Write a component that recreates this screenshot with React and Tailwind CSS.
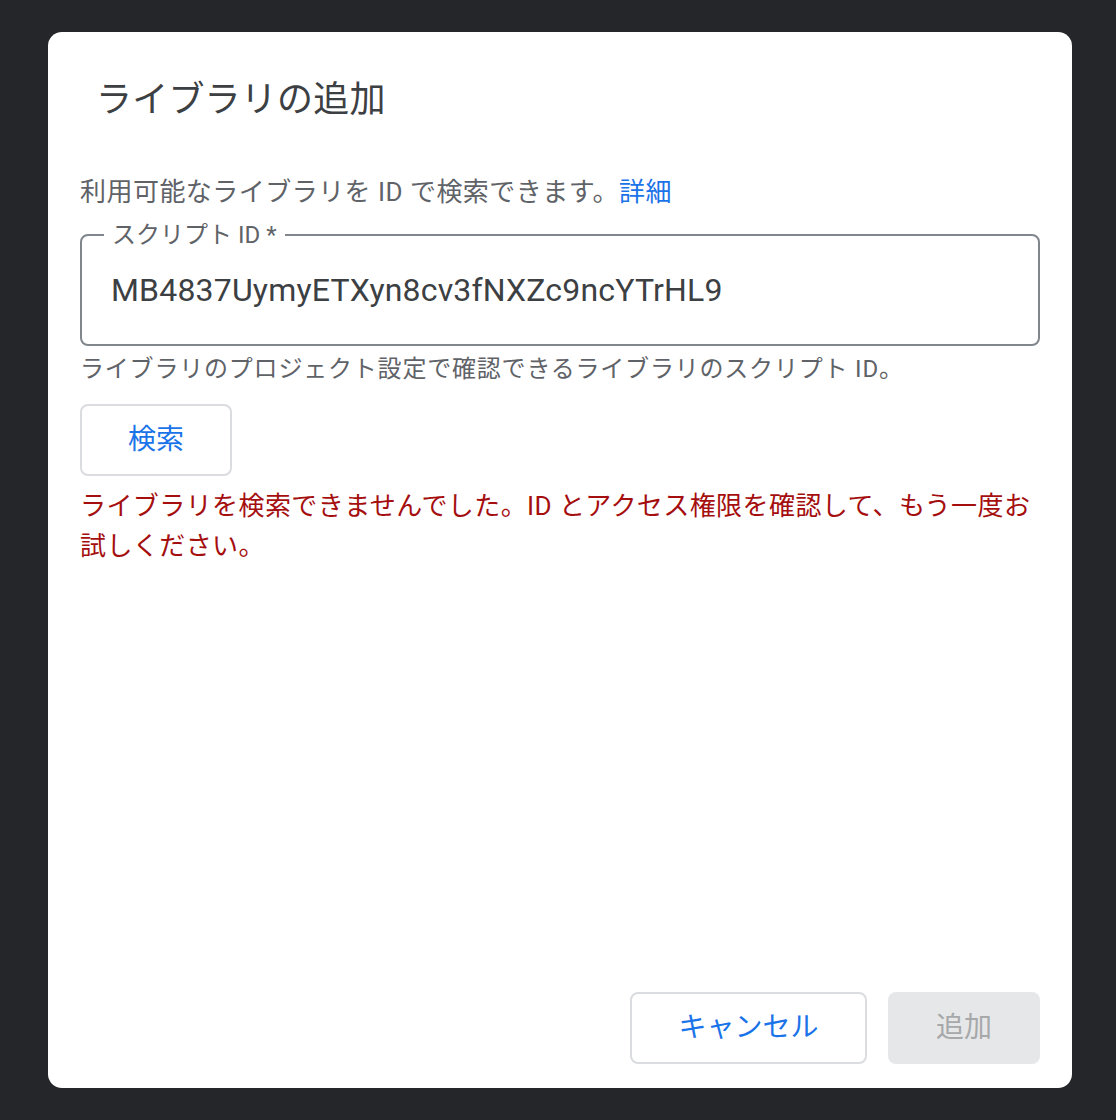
import React from 'react'

export default function App() {
  return (
    <div className="min-h-screen bg-[#252629] pt-[32px] pl-[48px] font-['Roboto','Noto_Sans_CJK_JP',sans-serif]">
      <div className="flex h-[1056px] w-[1024px] flex-col rounded-[14px] bg-white px-[32px] pt-[44px] pb-[24px]">
        <h1 className="pl-[16px] text-[36px] leading-[48px] font-normal tracking-[0.2px] text-[#3c4043]">ライブラリの追加</h1>

        <p className="mt-[50px] text-[26px] leading-[36px] tracking-[0.46px] text-[#5f6368]">
          利用可能なライブラリを ID で検索できます。<a href="#" className="text-[#1a73e8]">詳細</a>
        </p>

        <fieldset className="mt-[13px] rounded-[8px] border-2 border-[#80868b]">
          <legend className="ml-[22px] px-[8px] text-[24px] leading-[24px] text-[#5f6368]">スクリプト ID *</legend>
          <input
            readOnly
            defaultValue="MB4837UymyETXyn8cv3fNXZc9ncYTrHL9"
            className="block h-[97px] w-full bg-transparent pl-[29px] pb-[11px] text-[32px] tracking-[0.18px] text-[#3c4043] outline-none"
          />
        </fieldset>

        <p className="mt-[7px] text-[24px] leading-[32px] tracking-[0.8px] text-[#5f6368]">
          ライブラリのプロジェクト設定で確認できるライブラリのスクリプト ID。
        </p>

        <div className="mt-[19px]">
          <button className="h-[72px] w-[152px] rounded-[8px] border-2 border-[#dadce0] text-[28px] text-[#1a73e8]">検索</button>
        </div>

        <p className="mt-[10px] text-[26px] leading-[40px] tracking-[0.42px] text-[#a50e0e]">
          ライブラリを検索できませんでした。ID とアクセス権限を確認して、もう一度お試しください。
        </p>

        <div className="mt-auto flex justify-end gap-[21px]">
          <button className="h-[72px] w-[237px] rounded-[8px] border-2 border-[#dadce0] text-[28px] text-[#1a73e8]">キャンセル</button>
          <button disabled className="h-[72px] w-[152px] rounded-[8px] bg-[#e6e7e8] text-[28px] text-[#a6a8aa]">追加</button>
        </div>
      </div>
    </div>
  )
}
